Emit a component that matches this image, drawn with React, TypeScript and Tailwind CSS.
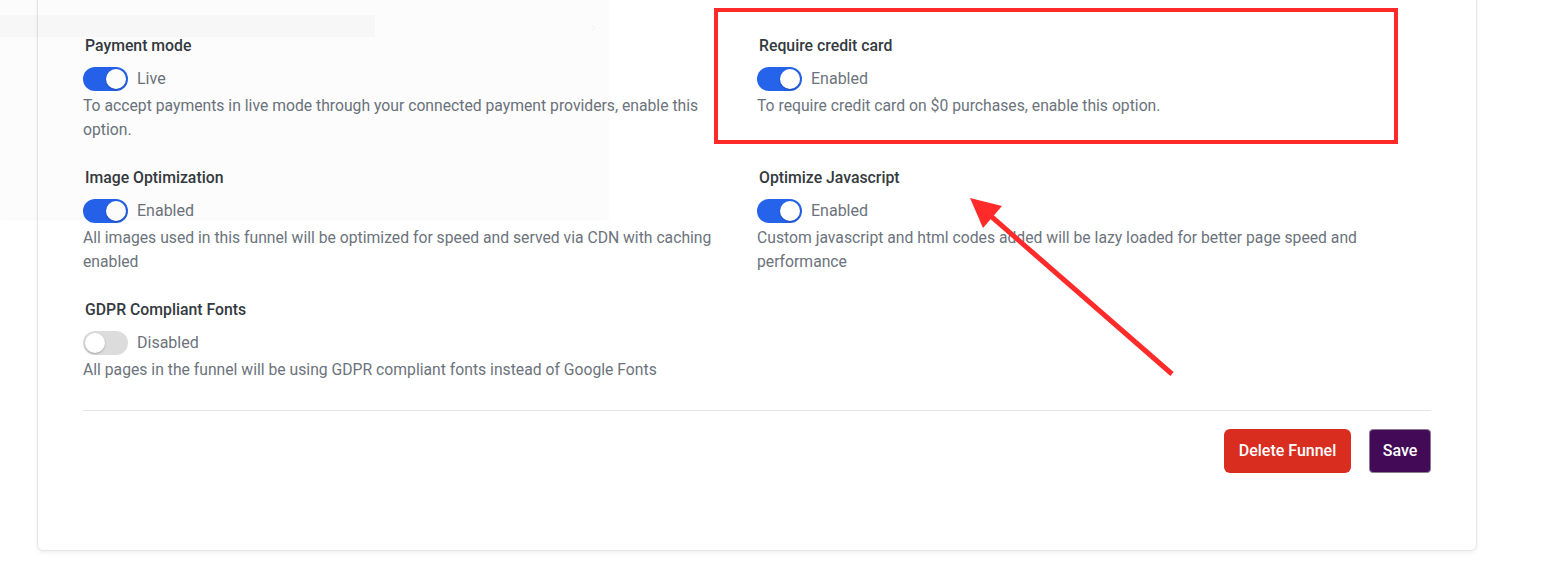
import { useState } from "react"

interface SettingProps {
  title: string
  enabled: boolean
  label: string
  description: string
}

function Toggle({ on }: { on: boolean }) {
  return (
    <span
      className={`relative inline-flex h-[24px] w-[45px] shrink-0 items-center rounded-full ${
        on ? "bg-[#2563eb]" : "bg-[#dcdcdc]"
      }`}
    >
      <span
        className={`absolute top-[2px] h-[20px] w-[20px] rounded-full bg-white shadow-[0_1px_2px_rgba(0,0,0,0.25)] ${
          on ? "left-[23px]" : "left-[2px]"
        }`}
      />
    </span>
  )
}

function Setting({ title, enabled, label, description }: SettingProps) {
  const [on, setOn] = useState(enabled)
  return (
    <div className="flex flex-col pr-[30px]">
      <h3 className="pl-[2px] text-[15.8px] leading-[22px] font-medium text-[#343a40]">{title}</h3>
      <button
        type="button"
        onClick={() => setOn(!on)}
        className="mt-[10px] flex h-[24px] items-center gap-[9px] text-left"
      >
        <Toggle on={on} />
        <span className="text-[16px] leading-[24px] text-[#6c737c]">{label}</span>
      </button>
      <p className="mt-[3px] text-[15.73px] leading-[24px] text-[#6c737c]">{description}</p>
    </div>
  )
}

const settings: SettingProps[] = [
  {
    title: "Payment mode",
    enabled: true,
    label: "Live",
    description:
      "To accept payments in live mode through your connected payment providers, enable this option.",
  },
  {
    title: "Require credit card",
    enabled: true,
    label: "Enabled",
    description: "To require credit card on $0 purchases, enable this option.",
  },
  {
    title: "Image Optimization",
    enabled: true,
    label: "Enabled",
    description:
      "All images used in this funnel will be optimized for speed and served via CDN with caching enabled",
  },
  {
    title: "Optimize Javascript",
    enabled: true,
    label: "Enabled",
    description:
      "Custom javascript and html codes added will be lazy loaded for better page speed and performance",
  },
  {
    title: "GDPR Compliant Fonts",
    enabled: false,
    label: "Disabled",
    description: "All pages in the funnel will be using GDPR compliant fonts instead of Google Fonts",
  },
]

export default function App() {
  return (
    <div
      className="relative h-[574px] w-[1542px] overflow-hidden bg-white"
      style={{ fontFamily: "Roboto, 'Liberation Sans', sans-serif" }}
    >
      <div className="-mt-[20px] ml-[37px] w-[1440px] rounded-[6px] border border-[#e6e6e6] bg-white px-[45px] pt-[54px] pb-[77px] shadow-[0_2px_4px_rgba(0,0,0,0.06)]">
        <div className="grid grid-cols-2 gap-y-[25px]">
          {settings.map((s) => (
            <Setting key={s.title} {...s} />
          ))}
        </div>

        <div className="mt-[28px] border-t border-[#e5e5e5]" />

        <div className="mt-[18px] flex justify-end gap-[18px]">
          <button className="h-[44px] w-[127px] rounded-[6px] bg-[#d92d20] text-[16px] font-medium text-white">
            Delete Funnel
          </button>
          <button className="h-[44px] w-[62px] rounded-[4px] border border-[#8a7f8f] bg-[#430b57] text-[16px] font-medium text-white">
            Save
          </button>
        </div>
      </div>

      {/* faded dropdown ghost over the top-left */}
      <div className="pointer-events-none absolute top-0 left-0 h-[218px] w-[608px] bg-black/[0.012] shadow-[0_1px_3px_rgba(0,0,0,0.04)]">
        <div className="mt-[15px] h-[22px] w-[375px] bg-black/[0.02]" />
        <span className="absolute top-[15px] left-[591px] text-[16px] text-black/[0.06]">›</span>
      </div>

      {/* annotation */}
      <div className="pointer-events-none absolute top-[8px] left-[714px] h-[136px] w-[684px] border-[4px] border-[#ff2a2a]" />
      <svg className="pointer-events-none absolute top-0 left-0" width="1542" height="574">
        <line x1="1172" y1="374" x2="985" y2="211" stroke="#ff2a2a" strokeWidth="5" />
        <polygon points="970,198 1002,206 983,228" fill="#ff2a2a" />
      </svg>
    </div>
  )
}
